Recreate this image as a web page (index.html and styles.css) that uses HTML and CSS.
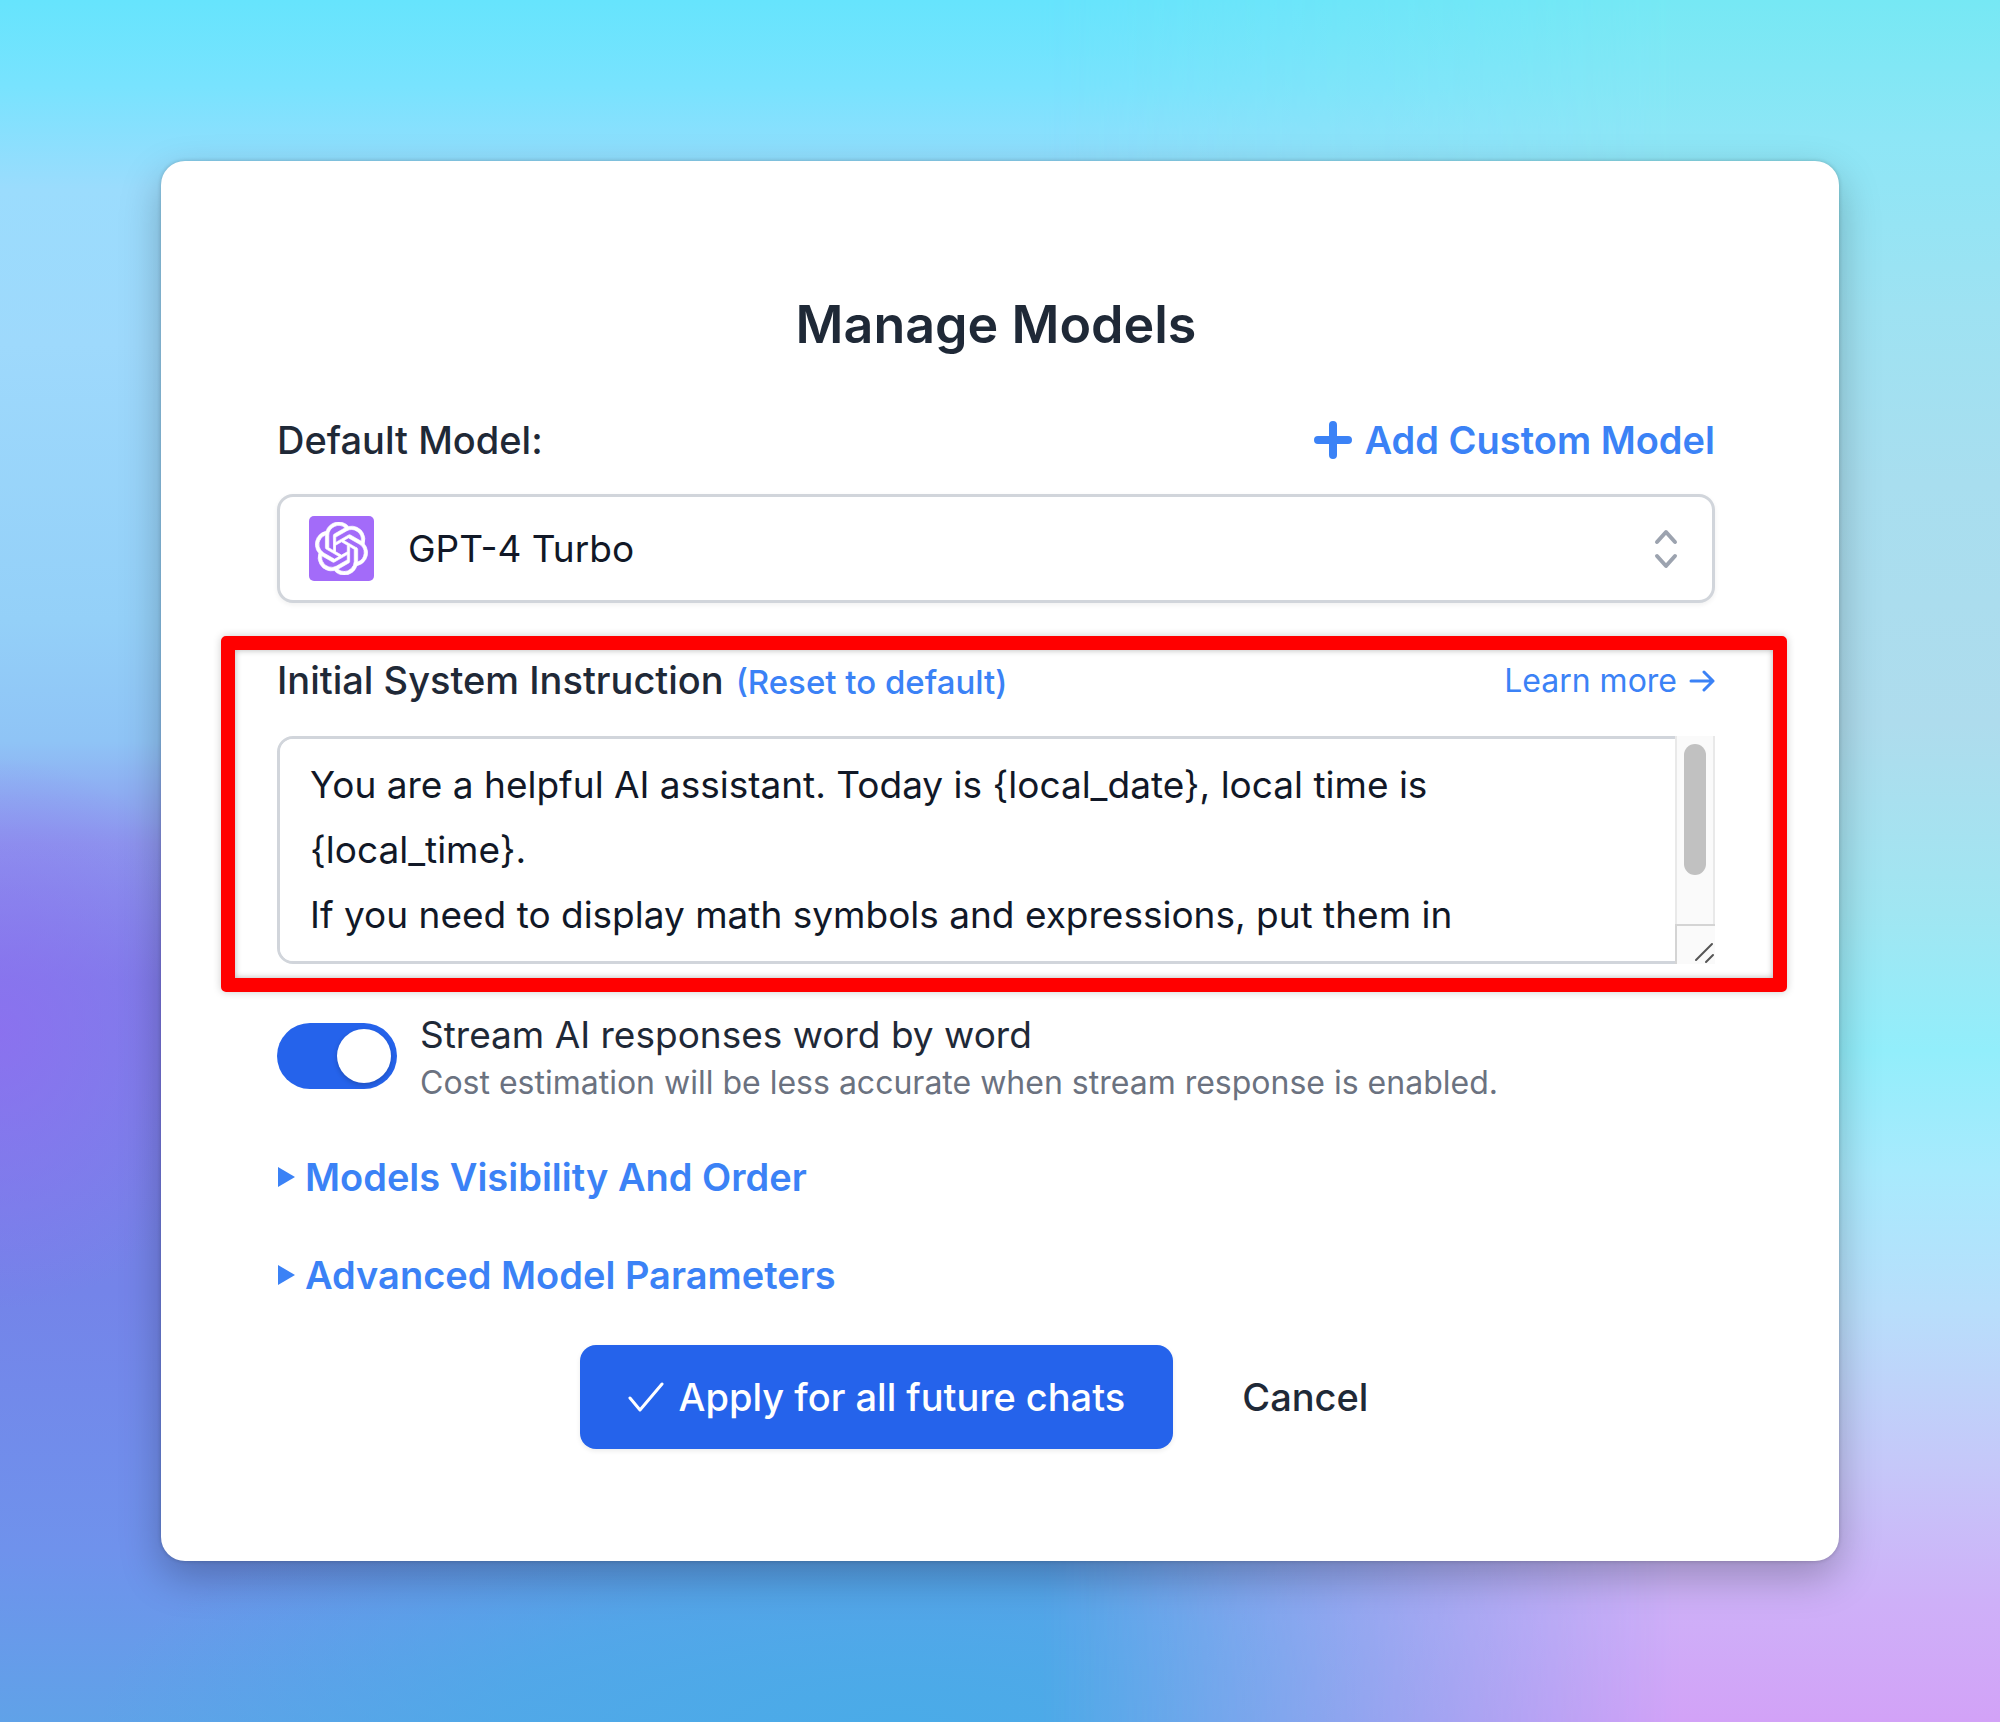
FILE: index.html
```html
<!DOCTYPE html>
<html lang="en">
<head>
    <meta charset="UTF-8">
    <meta name="viewport" content="width=device-width, initial-scale=1.0">
    <title>Manage Models</title>
    <link rel="stylesheet" href="styles.css">
</head>
<body>
    <main class="dialog">
        <h1>Manage Models</h1>
        <form id="models-form">
            <div class="field-header">
                <label for="default-model">Default Model:</label>
                <button type="button" class="link-button add-model">
                    <svg class="icon-plus" viewBox="0 0 38 38" aria-hidden="true">
                        <path d="M19 4v30M4 19h30"/>
                    </svg>
                    Add Custom Model
                </button>
            </div>
            <div class="select-box">
                <span class="model-icon">
                    <svg viewBox="0 0 24 24" aria-hidden="true">
                        <path d="M22.2819 9.8211a5.9847 5.9847 0 0 0-.5157-4.9108 6.0462 6.0462 0 0 0-6.5098-2.9A6.0651 6.0651 0 0 0 4.9807 4.1818a5.9847 5.9847 0 0 0-3.9977 2.9 6.0462 6.0462 0 0 0 .7427 7.0966 5.98 5.98 0 0 0 .511 4.9107 6.051 6.051 0 0 0 6.5146 2.9001A5.9847 5.9847 0 0 0 13.2599 24a6.0557 6.0557 0 0 0 5.7718-4.2058 5.9894 5.9894 0 0 0 3.9977-2.9001 6.0557 6.0557 0 0 0-.7475-7.0729zm-9.022 12.6081a4.4755 4.4755 0 0 1-2.8764-1.0408l.1419-.0804 4.7783-2.7582a.7948.7948 0 0 0 .3927-.6813v-6.7369l2.02 1.1686a.071.071 0 0 1 .038.052v5.5826a4.504 4.504 0 0 1-4.4945 4.4944zm-9.6607-4.1254a4.4708 4.4708 0 0 1-.5346-3.0137l.142.0852 4.783 2.7582a.7712.7712 0 0 0 .7806 0l5.8428-3.3685v2.3324a.0804.0804 0 0 1-.0332.0615L9.74 19.9502a4.4992 4.4992 0 0 1-6.1408-1.6464zM2.3408 7.8956a4.485 4.485 0 0 1 2.3655-1.9728V11.6a.7664.7664 0 0 0 .3879.6765l5.8144 3.3543-2.0201 1.1685a.0757.0757 0 0 1-.071 0l-4.8303-2.7865A4.504 4.504 0 0 1 2.3408 7.872zm16.5963 3.8558L13.1038 8.364 15.1192 7.2a.0757.0757 0 0 1 .071 0l4.8303 2.7913a4.4944 4.4944 0 0 1-.6765 8.1042v-5.6772a.79.79 0 0 0-.407-.667zm2.0107-3.0231l-.142-.0852-4.7735-2.7818a.7759.7759 0 0 0-.7854 0L9.409 9.2297V6.8974a.0662.0662 0 0 1 .0284-.0615l4.8303-2.7866a4.4992 4.4992 0 0 1 6.6802 4.66zM8.3065 12.863l-2.02-1.1638a.0804.0804 0 0 1-.038-.0567V6.0742a4.4992 4.4992 0 0 1 7.3757-3.4537l-.142.0805L8.704 5.459a.7948.7948 0 0 0-.3927.6813zm1.0976-2.3654l2.602-1.4998 2.6069 1.4998v2.9994l-2.5974 1.4997-2.6067-1.4997Z"/>
                    </svg>
                </span>
                <select id="default-model" name="default-model">
                    <option>GPT-4 Turbo</option>
                </select>
                <svg class="icon-updown" viewBox="0 0 24 40" aria-hidden="true">
                    <path d="M3 13l9-10 9 10M3 27l9 10 9-10"/>
                </svg>
            </div>

            <section class="instruction highlight">
                <div class="field-header">
                    <div class="field-title">
                        <label for="system-instruction">Initial System Instruction</label>
                        <button type="button" class="link-button reset">(Reset to default)</button>
                    </div>
                    <a class="learn-more" href="#learn-more">
                        Learn more
                        <svg class="icon-arrow" viewBox="0 0 26 22" aria-hidden="true">
                            <path d="M2 11h22M15 2l9 9-9 9"/>
                        </svg>
                    </a>
                </div>
                <div class="textarea-box">
                    <textarea id="system-instruction" name="system-instruction">You are a helpful AI assistant. Today is {local_date}, local time is {local_time}.
If you need to display math symbols and expressions, put them in
double dollar signs.</textarea>
                    <div class="scrollbar" aria-hidden="true">
                        <div class="track"><div class="thumb"></div></div>
                        <svg class="resizer" viewBox="0 0 38 38">
                            <path d="M19 34L35 18M29 36l7-7"/>
                        </svg>
                    </div>
                </div>
            </section>

            <div class="stream">
                <input type="checkbox" role="switch" class="toggle" id="stream" name="stream" aria-describedby="stream-note" checked>
                <div>
                    <label for="stream">Stream AI responses word by word</label>
                    <p id="stream-note">Cost estimation will be less accurate when stream response is enabled.</p>
                </div>
            </div>

            <details>
                <summary>Models Visibility And Order</summary>
            </details>
            <details>
                <summary>Advanced Model Parameters</summary>
            </details>

            <div class="actions">
                <button type="submit" class="btn btn-primary">
                    <svg class="icon-check" viewBox="0 0 36 30" aria-hidden="true">
                        <path d="M2 16l10 12L34 2"/>
                    </svg>
                    Apply for all future chats
                </button>
                <button type="button" class="btn btn-cancel">Cancel</button>
            </div>
        </form>
    </main>
</body>
</html>
```
FILE: styles.css
```css
* {
    box-sizing: border-box;
}

body {
    position: relative;
    z-index: 0;
    margin: 0;
    min-height: 100vh;
    padding: 161px;
    font-family: Inter, 'Liberation Sans', sans-serif;
    font-size: 37px;
    line-height: 48px;
    color: #1f2937;
    background:
        radial-gradient(ellipse 40% 16% at 45% 100%, #4aabe8 0%, rgba(74, 171, 232, 0.7) 50%, rgba(74, 171, 232, 0) 100%),
        radial-gradient(ellipse 12% 16% at 0% 60%, rgba(142, 110, 240, 0.8) 0%, rgba(142, 110, 240, 0) 100%),
        linear-gradient(#66e4fd 0%, #78e3fe 5%, #9bdcfd 11%, #9ed9fc 20%, #94d0f8 36%, #8fc4f6 43%, #8d97ee 49%, #7d80e9 57%, #7484e9 75%, #6f92ec 90%, #60a2e8 100%);
}

/* right half of the backdrop, faded into the left one */
body::before {
    content: '';
    position: absolute;
    inset: 0;
    z-index: -1;
    background: linear-gradient(#76e8f4 0%, #8de6f6 8%, #9ee2f2 18%, #a8deef 28%, #aedced 42%, #a0e6f2 53%, #92eefb 61%, #a8eafd 68%, #b8defb 76%, #c5c8f9 85%, #ceb0f8 93%, #d2a2f7 100%);
    -webkit-mask-image: linear-gradient(to right, transparent 52%, #000 84%);
    mask-image: linear-gradient(to right, transparent 52%, #000 84%);
}

.dialog {
    padding: 128px 124px 112px 116px;
    background: #fff;
    border-radius: 24px;
    box-shadow: 0 16px 40px rgba(0, 0, 0, 0.25), 0 0 4px rgba(0, 0, 0, 0.2);
}

h1 {
    margin: 0 0 55px;
    font-size: 52px;
    font-weight: 600;
    line-height: 72px;
    text-align: center;
}

button,
select,
textarea {
    font: inherit;
}

button {
    cursor: pointer;
}

.field-header {
    display: flex;
    align-items: center;
    justify-content: space-between;
    margin-bottom: 30px;
}

.field-header label {
    font-size: 38px;
    font-weight: 500;
}

.link-button {
    padding: 0;
    border: none;
    background: none;
    color: #3b82f6;
}

.add-model {
    display: flex;
    align-items: center;
    gap: 13px;
    font-size: 38px;
    font-weight: 600;
}

svg {
    fill: none;
    stroke: currentColor;
    stroke-linecap: round;
    stroke-linejoin: round;
}

.icon-plus {
    width: 38px;
    height: 38px;
    stroke-width: 8;
}

.select-box {
    position: relative;
}

.select-box select {
    display: block;
    width: 100%;
    height: 109px;
    padding: 0 128px;
    appearance: none;
    border: 3px solid #d1d5db;
    border-radius: 16px;
    background: #fff;
    color: #111827;
    box-shadow: 0 2px 5px rgba(0, 0, 0, 0.06);
}

.model-icon {
    position: absolute;
    top: 22px;
    left: 32px;
    display: grid;
    place-items: center;
    width: 65px;
    height: 65px;
    border-radius: 5px;
    background: #a36bf9;
    pointer-events: none;
}

.model-icon svg {
    width: 53px;
    height: 53px;
    fill: #fff;
    stroke: #fff;
    stroke-width: 0.3;
}

.icon-updown {
    position: absolute;
    top: 35px;
    right: 37px;
    width: 24px;
    height: 40px;
    color: #9ca3af;
    stroke-width: 4;
    pointer-events: none;
}

.instruction {
    margin-top: 53px;
}

.field-title {
    display: flex;
    align-items: baseline;
    gap: 12px;
}

.reset {
    font-size: 33px;
    font-weight: 500;
}

.learn-more {
    display: flex;
    align-items: center;
    gap: 12px;
    color: #3b82f6;
    font-size: 32px;
    text-decoration: none;
}

.icon-arrow {
    width: 26px;
    height: 22px;
    stroke-width: 3;
}

/* red frame around the instruction field */
.highlight {
    position: relative;
}

.highlight::before {
    content: '';
    position: absolute;
    inset: -20px -72px -28px -56px;
    border: 14px solid #f00;
    border-radius: 5px;
    box-shadow: 0 0 8px rgba(0, 0, 0, 0.2), inset 0 0 6px rgba(0, 0, 0, 0.3);
    pointer-events: none;
}

.textarea-box {
    position: relative;
}

textarea {
    display: block;
    width: 100%;
    height: 228px;
    padding: 13px 80px 13px 30px;
    border: 3px solid #d1d5db;
    border-radius: 16px;
    background: #fff;
    color: #111827;
    line-height: 65px;
    resize: none;
    scrollbar-width: none;
}

.scrollbar {
    position: absolute;
    top: 0;
    right: 0;
    bottom: 0;
    display: flex;
    flex-direction: column;
    width: 40px;
    background: #fafafa;
}

.track {
    flex: 1;
    padding: 8px 7px;
    border: solid #e9e9e9;
    border-width: 0 2px;
}

.thumb {
    width: 22px;
    height: 131px;
    border-radius: 11px;
    background: #c1c1c1;
}

.resizer {
    width: 40px;
    height: 40px;
    border: solid #d4d4d4;
    border-width: 2px 0 0 2px;
    color: #555;
    stroke-width: 2;
}

.stream {
    display: flex;
    align-items: flex-start;
    gap: 23px;
    margin-top: 47px;
}

.stream label {
    display: block;
}

.stream p {
    margin: 0;
    font-size: 32px;
    color: #6b7280;
}

.toggle {
    flex: none;
    width: 120px;
    height: 66px;
    margin: 12px 0 0;
    padding: 6px;
    appearance: none;
    border-radius: 33px;
    background: #d1d5db;
    cursor: pointer;
}

.toggle::before {
    content: '';
    display: block;
    width: 54px;
    height: 54px;
    border-radius: 50%;
    background: #fff;
    box-shadow: 0 2px 5px rgba(0, 0, 0, 0.2);
}

.toggle:checked {
    background: #2563eb;
}

.toggle:checked::before {
    margin-left: auto;
}

details {
    margin-top: 50px;
}

.stream + details {
    margin-top: 46px;
}

summary {
    display: flex;
    align-items: center;
    gap: 10px;
    color: #3b82f6;
    font-size: 38px;
    font-weight: 600;
    list-style: none;
    cursor: pointer;
}

summary::before {
    content: '';
    margin-left: 1px;
    border-left: 17px solid currentColor;
    border-top: 10px solid transparent;
    border-bottom: 10px solid transparent;
}

.actions {
    display: flex;
    justify-content: center;
    gap: 25px;
    margin-top: 46px;
}

.btn {
    display: flex;
    align-items: center;
    gap: 15px;
    height: 104px;
    padding: 0 44px;
    border: none;
    border-radius: 16px;
    background: #fff;
    color: #1f2937;
    font-size: 38px;
    font-weight: 500;
}

.btn-primary {
    padding: 0 48px;
    background: #2563eb;
    color: #fff;
    box-shadow: 0 2px 5px rgba(0, 0, 0, 0.08);
}

.icon-check {
    width: 36px;
    height: 30px;
    stroke-width: 3;
}
```
